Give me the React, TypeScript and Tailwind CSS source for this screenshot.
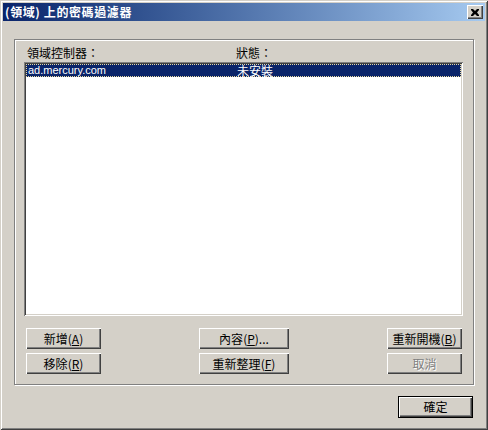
const cjk = { fontFamily: '"Noto Sans CJK TC", "Liberation Sans", sans-serif' }
const latin = { fontFamily: '"Liberation Sans", "DejaVu Sans", sans-serif' }

const raised =
	'shadow-[inset_1px_1px_0_#ffffff,inset_-1px_-1px_0_#404040,inset_-2px_-2px_0_#808080]'

function Btn({
	label,
	mnemonic,
	suffix,
	w,
	disabled,
}: {
	label: string
	mnemonic?: string
	suffix?: string
	w: string
	disabled?: boolean
}) {
	return (
		<div
			className={`flex h-[21px] ${w} items-center justify-center bg-[#d4d0c8] text-[12px] leading-none ${raised} ${
				disabled
					? 'text-[#808080] [text-shadow:1px_1px_0_#ffffff]'
					: 'text-black'
			}`}
			style={cjk}
		>
			<span>{label}</span>
			{mnemonic && (
				<span>
					(<u>{mnemonic}</u>)
				</span>
			)}
			{suffix && <span>{suffix}</span>}
		</div>
	)
}

export default function App() {
	return (
		<div className="flex h-[430px] w-[488px] flex-col bg-[#d4d0c8] p-[3px] shadow-[inset_1px_1px_0_#d4d0c8,inset_-1px_-1px_0_#404040,inset_2px_2px_0_#ffffff,inset_-2px_-2px_0_#808080]">
			{/* title bar */}
			<div className="flex h-[18px] items-center justify-between bg-gradient-to-r from-[#0a246a] to-[#a6caf0] pl-[2px] pr-[2px]">
				<span
					className="text-[12px] font-bold leading-none tracking-[0.6px] text-white"
					style={cjk}
				>
					(領域) 上的密碼過濾器
				</span>
				<div
					className={`flex h-[14px] w-[16px] items-center justify-center bg-[#d4d0c8] ${raised}`}
				>
					<svg width="8" height="7" viewBox="0 0 8 7">
						<path
							d="M0 0h2l2 2 2-2h2v1L6 3.5 8 6v1H6L4 5 2 7H0V6l2-2.5L0 1z"
							fill="#000"
						/>
					</svg>
				</div>
			</div>

			{/* group box */}
			<div className="ml-[11px] mt-[18px] flex h-[346px] w-[460px] flex-col border border-[#808080] shadow-[inset_1px_1px_0_#ffffff,1px_1px_0_#ffffff] pl-[9px]">
				<div className="mt-[5px] flex h-[16px] items-center text-[12px] text-black" style={cjk}>
					<span className="ml-[3px] w-[209px]">領域控制器：</span>
					<span>狀態：</span>
				</div>
				<div className="mt-[1px] h-[254px] w-[439px] bg-white p-[2px] shadow-[inset_1px_1px_0_#808080,inset_-1px_-1px_0_#ffffff,inset_2px_2px_0_#404040,inset_-2px_-2px_0_#d4d0c8]">
					<div className="flex h-[13px] items-center border border-dotted border-[#e8d9a0] bg-[#0a246a] text-[11px] leading-none text-white">
						<span className="ml-[1px] w-[209px]" style={latin}>
							ad.mercury.com
						</span>
						<span className="text-[12px]" style={cjk}>
							未安裝
						</span>
					</div>
				</div>
				<div className="ml-[2px] mt-[12px] flex w-[436px] justify-between">
					<div className="flex flex-col gap-[4px]">
						<Btn label="新增" mnemonic="A" w="w-[75px]" />
						<Btn label="移除" mnemonic="R" w="w-[75px]" />
					</div>
					<div className="flex flex-col gap-[4px]">
						<Btn label="內容" mnemonic="P" suffix="..." w="w-[90px]" />
						<Btn label="重新整理" mnemonic="F" w="w-[90px]" />
					</div>
					<div className="flex flex-col gap-[4px]">
						<Btn label="重新開機" mnemonic="B" w="w-[75px]" />
						<Btn label="取消" w="w-[75px]" disabled />
					</div>
				</div>
			</div>

			{/* footer */}
			<div className="mt-[11px] flex justify-end pr-[12px]">
				<div className="border border-black">
					<div
						className={`flex h-[20px] w-[73px] items-center justify-center bg-[#d4d0c8] text-[12px] text-black ${raised}`}
						style={cjk}
					>
						確定
					</div>
				</div>
			</div>
		</div>
	)
}
